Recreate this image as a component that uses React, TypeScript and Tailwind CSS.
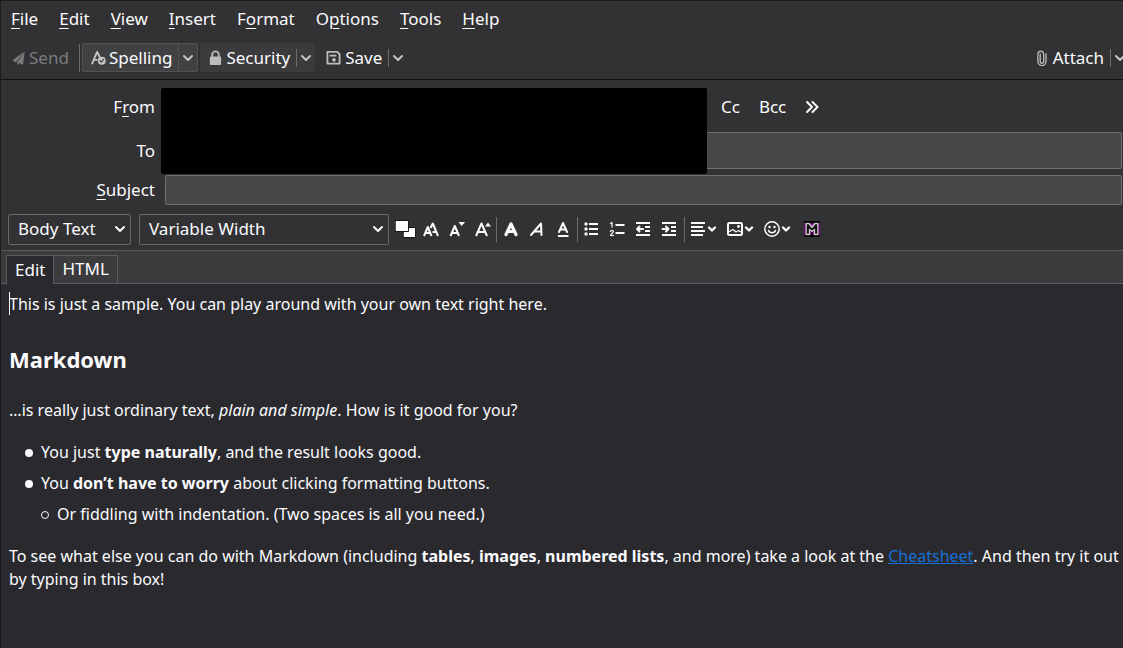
import React from "react";

type IconProps = { className?: string; children: React.ReactNode; box?: string };

function Icon({ className = "size-4", box = "0 0 16 16", children }: IconProps) {
  return (
    <svg
      aria-hidden="true"
      viewBox={box}
      className={`shrink-0 ${className}`}
      fill="none"
      stroke="currentColor"
      strokeWidth="2"
      strokeLinecap="round"
      strokeLinejoin="round"
    >
      {children}
    </svg>
  );
}

function Chevron({ className = "h-2 w-3" }: { className?: string }) {
  return (
    <Icon className={className} box="0 0 12 8">
      <path d="M2 2l4 4 4-4" />
    </Icon>
  );
}

const menus: [string, string, string][] = [
  ["", "F", "ile"],
  ["", "E", "dit"],
  ["", "V", "iew"],
  ["", "I", "nsert"],
  ["F", "o", "rmat"],
  ["O", "p", "tions"],
  ["", "T", "ools"],
  ["", "H", "elp"],
];

function Key({ children }: { children: React.ReactNode }) {
  return <span className="underline decoration-1 underline-offset-3">{children}</span>;
}

function MenuBar() {
  return (
    <nav className="flex h-9 items-center gap-[5px] pl-[2px]">
      {menus.map(([before, key, after]) => (
        <button key={before + key + after} type="button" className="px-2">
          {before}
          <Key>{key}</Key>
          {after}
        </button>
      ))}
    </nav>
  );
}

function Toolbar() {
  return (
    <div className="flex h-[43px] items-center border-b border-[#111113] pb-px">
      <button type="button" disabled className="flex items-center gap-[3px] pl-[11px] text-[#7b7b7d]">
        <Icon className="size-[14px]">
          <path
            fill="currentColor"
            stroke="none"
            d="M14.500 0.500L0.500 10.500l4 2.500zM14.500 0.500L6 13l0 3 2.500-2.200 4 2.200z"
          />
        </Icon>
        Send
      </button>
      <span className="ml-[10px] h-7 w-px bg-[#6c6c6e]" />
      <div className="ml-[2px] flex h-[29px] rounded-xs border border-[#525254] bg-[#414143]">
        <button type="button" className="flex items-center gap-[3px] pr-[6px] pl-2">
          <Icon className="size-[15px] text-[#c4c4c6]">
            <path strokeLinecap="butt" d="M1 15L6.500 2l3 6M3.500 10.500H7" />
            <circle cx="11.500" cy="11.500" r="4.200" fill="currentColor" stroke="none" />
            <path stroke="#414143" strokeWidth="1.300" d="M9.500 11.500l1.500 1.500 2.500-3" />
          </Icon>
          Spelling
        </button>
        <button
          type="button"
          aria-label="Spelling languages"
          className="flex items-center border-l border-[#525254] px-[3px] text-[#c4c4c6]"
        >
          <Chevron />
        </button>
      </div>
      <div className="ml-[2px] flex h-[29px] items-center rounded-xs bg-[#3b3b3d]">
        <button type="button" className="flex items-center gap-[3px] pr-[6px] pl-2">
          <Icon className="size-[15px] text-[#bdbdbf]">
            <rect x="2" y="7" width="12" height="9" rx="1.200" fill="currentColor" stroke="none" />
            <path d="M4.500 8V5a3.500 3.500 0 0 1 7 0v3" />
          </Icon>
          Security
        </button>
        <span className="h-[18px] w-px bg-[#6c6c6e]" />
        <button type="button" aria-label="Security options" className="px-[3px] text-[#c4c4c6]">
          <Chevron />
        </button>
      </div>
      <div className="ml-[3px] flex h-[29px] items-center">
        <button type="button" className="flex items-center gap-1 pr-[6px] pl-2">
          <Icon className="size-[15px] text-[#bdbdbf]">
            <path d="M1.500 2h10.500l2.500 2.500V14.500H1.500z" />
            <path strokeLinecap="butt" d="M4 6h7" />
            <circle cx="8.500" cy="10.500" r="2" fill="currentColor" stroke="none" />
          </Icon>
          Save
        </button>
        <span className="h-[18px] w-px bg-[#6c6c6e]" />
        <button type="button" aria-label="Save options" className="px-[3px] text-[#c4c4c6]">
          <Chevron />
        </button>
      </div>
      <div className="-mr-[6px] ml-auto flex items-center">
        <button type="button" className="flex items-center gap-[6px] pr-[6px]">
          <Icon className="h-4 w-[10px] text-[#bdbdbf]" box="0 0 10 16">
            <path
              strokeWidth="1.300"
              d="M3.200 4v7.500a1.700 1.700 0 0 0 3.500 0V4a2.900 2.900 0 0 0-5.800 0v7.500a4 4 0 0 0 8.100 0V4"
            />
          </Icon>
          Attach
        </button>
        <span className="h-[18px] w-px bg-[#6c6c6e]" />
        <button type="button" aria-label="Attach options" className="px-[3px] text-[#c4c4c6]">
          <Chevron />
        </button>
      </div>
    </div>
  );
}

const fieldStyle = "w-full rounded-xs border border-[#707072] bg-[#474749] px-2 outline-none";

function Recipients() {
  return (
    <div className="relative grid grid-cols-[154px_1fr] items-center gap-x-[10px] pt-2 pr-px">
      <label htmlFor="from" className="text-right">
        F<Key>r</Key>om
      </label>
      <div className="flex h-[38px] items-center gap-[19px]">
        <input id="from" className="h-[30px] w-[537px] bg-black outline-none" />
        <button type="button">Cc</button>
        <button type="button">Bcc</button>
        <button type="button" aria-label="More address fields">
          <Icon className="h-4 w-[14px]" box="0 0 14 16">
            <path d="M2 3l5 5-5 5M7.500 3l5 5-5 5" />
          </Icon>
        </button>
      </div>
      <label htmlFor="to" className="pt-[6px] text-right">
        To
      </label>
      <input id="to" className={`mt-[6px] h-[37px] ${fieldStyle}`} />
      <label htmlFor="subject" className="pt-[6px] text-right">
        <Key>S</Key>ubject
      </label>
      <input id="subject" className={`mt-[6px] h-[30px] ${fieldStyle}`} />
      <div className="absolute top-2 left-40 h-[86px] w-[546px] rounded-xs bg-black" />
    </div>
  );
}

function Picker({ label, value, width }: { label: string; value: string; width: string }) {
  return (
    <div className={`relative flex items-center ${width}`}>
      <select
        aria-label={label}
        className="h-[31px] w-full appearance-none rounded-xs border border-[#69696b] bg-[#323234] pl-[9px] outline-none"
      >
        <option>{value}</option>
      </select>
      <span className="pointer-events-none absolute right-[5px] flex">
        <Chevron />
      </span>
    </div>
  );
}

function Tool({ label, menu, children }: { label: string; menu?: boolean; children: React.ReactNode }) {
  return (
    <button
      type="button"
      aria-label={label}
      className={menu ? "flex items-center gap-px px-[5px]" : "flex items-center px-[5px]"}
    >
      {children}
      {menu && (
        <Icon className="h-2 w-[10px]" box="0 0 10 8">
          <path strokeWidth="2.400" d="M2 2.500l3 3 3-3" />
        </Icon>
      )}
    </button>
  );
}

function Divider() {
  return <span className="h-[25px] w-px shrink-0 bg-[#6c6c6e]" />;
}

function FormatBar() {
  return (
    <div className="flex h-[45px] items-center pt-[3px] pl-[7px]">
      <Picker label="Paragraph format" value="Body Text" width="w-[123px]" />
      <Picker label="Font" value="Variable Width" width="ml-2 w-[250px]" />
      <button type="button" aria-label="Text color" className="ml-[6px] mr-px">
        <Icon className="h-5 w-[22px]" box="0 0 22 20">
          <g strokeWidth="1" stroke="#18181b">
            <rect x="8.500" y="8.500" width="12" height="10" fill="#fff" />
            <rect x="0.500" y="1.500" width="13" height="11" fill="#fbfbfe" />
          </g>
        </Icon>
      </button>
      <Tool label="Remove text styling">
        <Icon>
          <path strokeLinecap="butt" d="M1 15L4.800 6 8.500 15M2.500 12h4.500M7.500 7L9.800 2.500 15 15M9.500 11h4" />
        </Icon>
      </Tool>
      <Tool label="Smaller font size">
        <Icon>
          <path strokeLinecap="butt" d="M1.500 15L5.800 5l4.200 10M3 12h5.500" />
          <path fill="currentColor" stroke="none" d="M9.500 1h6.500L12.700 5z" />
        </Icon>
      </Tool>
      <Tool label="Larger font size">
        <Icon>
          <path strokeLinecap="butt" d="M1 15L6.500 2.500 12 15M3 11h7" />
          <path fill="currentColor" stroke="none" d="M10 5.500h6L13 1.500z" />
        </Icon>
      </Tool>
      <Divider />
      <span className="w-px" />
      <Tool label="Bold">
        <Icon>
          <path strokeWidth="3.200" d="M3 13.500L8 3l5 10.500M4.500 10.500h7" />
        </Icon>
      </Tool>
      <Tool label="Italic">
        <Icon>
          <path d="M2 14L12 2.500 12.500 14M5.500 10.500h7" />
        </Icon>
      </Tool>
      <Tool label="Underline">
        <Icon>
          <path d="M4 11L8 2l4 9M5.500 8.500h5" />
          <path strokeLinecap="butt" d="M3 15h10.500" />
        </Icon>
      </Tool>
      <span className="w-px" />
      <Divider />
      <Tool label="Bulleted list">
        <Icon>
          <path strokeLinecap="butt" d="M6 3h9M6 8h9M6 13h9" />
          <g fill="currentColor" stroke="none">
            <circle cx="3" cy="3" r="1.700" />
            <circle cx="3" cy="8" r="1.700" />
            <circle cx="3" cy="13" r="1.700" />
          </g>
        </Icon>
      </Tool>
      <Tool label="Numbered list">
        <Icon>
          <path strokeLinecap="butt" d="M6.500 4h9M6.500 12h9" />
          <path strokeWidth="1.200" d="M1.500 2.500L3 1.500V6M1.500 10.500c0-1.500 3-1.500 2.800 0.200C4 12 2 13 1.500 14.500h3" />
        </Icon>
      </Tool>
      <Tool label="Outdent">
        <Icon>
          <path strokeLinecap="butt" d="M1 2h14M10 6h5M10 10h5M1 14h14" />
          <path d="M8 8H2M4.500 5.500L2 8l2.500 2.500" />
        </Icon>
      </Tool>
      <Tool label="Indent">
        <Icon>
          <path strokeLinecap="butt" d="M1 2h14M10 6h5M10 10h5M1 14h14" />
          <path d="M1.500 8H7M5 5.500L7.500 8 5 10.500" />
        </Icon>
      </Tool>
      <span className="w-[2px]" />
      <Divider />
      <Tool label="Text alignment" menu>
        <Icon>
          <path strokeLinecap="butt" d="M1 2h14M1 6h12M1 10h14M1 14h12" />
        </Icon>
      </Tool>
      <Tool label="Insert image" menu>
        <Icon>
          <rect x="1" y="2" width="14" height="12" rx="1.500" />
          <path strokeWidth="1.200" d="M2.500 10.500l3.500-2 3 2.500 2.500-1.500 2.500 1.500" />
          <circle cx="11.500" cy="5.500" r="1.400" fill="currentColor" stroke="none" />
        </Icon>
      </Tool>
      <Tool label="Insert smiley" menu>
        <Icon>
          <circle cx="8" cy="8" r="7.200" strokeWidth="1.500" />
          <path strokeWidth="1.500" d="M4.500 9.500c1 3 6 3 7 0" />
          <circle cx="5.500" cy="6" r="1.200" fill="currentColor" stroke="none" />
          <circle cx="10.500" cy="6" r="1.200" fill="currentColor" stroke="none" />
        </Icon>
      </Tool>
      <button type="button" aria-label="Toggle Markdown" className="ml-2">
        <Icon>
          <rect width="16" height="16" rx="1.500" fill="#000" stroke="none" />
          <path
            stroke="#9b12a8"
            strokeWidth="1.500"
            strokeLinecap="butt"
            d="M1 2v12M15 2v12M6 2l2 3 2-3M6.500 14v-3.500M9.500 14v-3.500"
          />
          <path
            stroke="#c9c9cb"
            strokeWidth="1.300"
            fill="#141416"
            d="M2.200 2.500H5L8 6.500l3-4h2.800V13.500H10.500V8.500L8 10.500 5.500 8.500V13.500H2.200z"
          />
        </Icon>
      </button>
    </div>
  );
}

function Tabs() {
  return (
    <div role="tablist" className="flex h-[34px] items-end border-t border-[#5b5b5d] bg-[#3c3c3e]">
      <span className="w-[5px] self-stretch border-b border-[#5b5b5d]" />
      <button
        type="button"
        role="tab"
        aria-selected="true"
        className="h-[29px] border-t border-l border-[#5b5b5d] bg-[#2a2a2e] px-2 pb-px"
      >
        Edit
      </button>
      <button type="button" role="tab" aria-selected="false" className="h-[29px] border border-[#5b5b5d] px-2 pb-px">
        HTML
      </button>
      <span className="flex-1 self-stretch border-b border-[#5b5b5d]" />
    </div>
  );
}

const discItem =
  "relative before:absolute before:top-2 before:-left-4 before:size-2 before:rounded-full before:bg-[#fbfbfe]";
const circleItem =
  "relative before:absolute before:top-2 before:-left-4 before:size-2 before:rounded-full before:border before:border-[#fbfbfe]";

function Editor() {
  return (
    <main className="flex-1 bg-[#2a2a2e] pt-[9px] pl-2 text-base leading-[23px]">
      <p className="relative">
        <span className="absolute -top-px left-0 h-[23px] w-px bg-white" />
        This is just a sample. You can play around with your own text right here.
      </p>
      <h2 className="mt-[26px] mb-[23px] text-[22px] leading-[34px] font-bold">Markdown</h2>
      <p>
        …is really just ordinary text, <em>plain and simple</em>. How is it good for you?
      </p>
      <ul className="my-[19px] space-y-2 pl-8">
        <li className={discItem}>
          You just <strong>type naturally</strong>, and the result looks good.
        </li>
        <li className={discItem}>
          You <strong>don’t have to worry</strong> about clicking formatting buttons.
          <ul className="mt-2 pl-4">
            <li className={circleItem}>Or fiddling with indentation. (Two spaces is all you need.)</li>
          </ul>
        </li>
      </ul>
      <p>
        To see what else you can do with Markdown (including <strong>tables</strong>, <strong>images</strong>,{" "}
        <strong>numbered lists</strong>, and more) take a look at the{" "}
        <a href="#cheatsheet" className="text-[#1670d6] underline">
          Cheatsheet
        </a>
        . And then try it out by typing in this box!
      </p>
    </main>
  );
}

export default function App() {
  return (
    <div className="flex min-h-screen flex-col overflow-hidden border-t border-l border-[#1b1b1d] bg-[#323234] font-['Noto_Sans',sans-serif] text-[17px] leading-6 text-[#fbfbfe]">
      <MenuBar />
      <Toolbar />
      <Recipients />
      <FormatBar />
      <Tabs />
      <Editor />
    </div>
  );
}
